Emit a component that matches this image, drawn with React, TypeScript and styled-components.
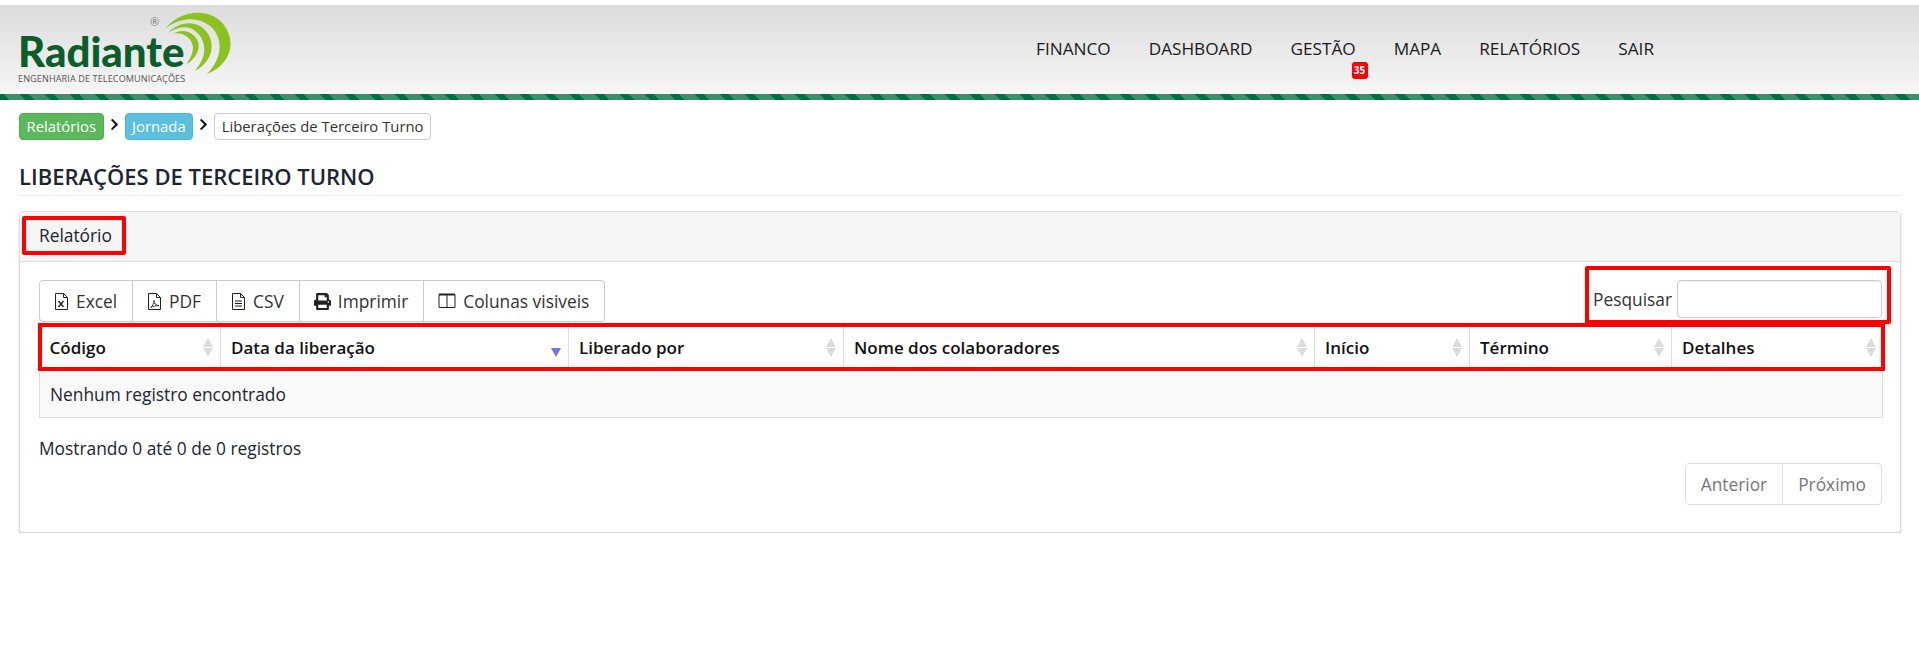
import React from "react";
import styled, { createGlobalStyle } from "styled-components";
import { FaChevronRight, FaPrint } from "react-icons/fa";

const GlobalStyle = createGlobalStyle`
  html, body {
    margin: 0;
    background: #fff;
    color: #1c2530;
    font-family: "Open Sans", "Liberation Sans", sans-serif;
    font-size: 17.33px;
  }
  * { box-sizing: border-box; }
`;

const Header = styled.header`
  margin-top: 5px;
  height: 95px;
  display: flex;
  flex-direction: column;
`;

const HeaderBar = styled.div`
  flex: 1;
  display: flex;
  align-items: flex-start;
  justify-content: space-between;
  padding: 0 265px 0 18px;
  background: linear-gradient(#dcdcdc, #f6f6f6);
`;

const Stripe = styled.div`
  height: 6px;
  background: repeating-linear-gradient(
    45deg,
    #006f43 0,
    #006f43 7px,
    #3a8f6c 7px,
    #3a8f6c 17.68px
  );
`;

const Logo = styled.div`
  position: relative;
  width: 213px;
  height: 89px;
`;

const LogoName = styled.div`
  padding-top: 28px;
  font-family: Lato, "Open Sans", sans-serif;
  font-size: 42px;
  line-height: 36px;
  font-weight: 900;
  color: #0b5d2c;
`;

const LogoTagline = styled.div`
  margin-top: 5px;
  font-size: 9.1px;
  line-height: 10px;
  letter-spacing: 0.1px;
  color: #555;
  white-space: nowrap;
`;

const LogoMark = styled.span`
  position: absolute;
  left: 132px;
  top: 11px;
  font-size: 11px;
  line-height: 12px;
  color: #777;
`;

const LogoWaves = styled.svg`
  position: absolute;
  left: 127px;
  top: 1px;
`;

const Nav = styled.nav`
  display: flex;
  gap: 38px;
  padding-top: 33px;
`;

const NavItem = styled.a`
  position: relative;
  font-size: 17.2px;
  line-height: 22px;
  color: #1a1a1a;
  text-transform: uppercase;
`;

const NavBadge = styled.span`
  position: absolute;
  left: 61px;
  top: 24px;
  width: 16px;
  height: 17px;
  border-radius: 3px;
  background: #f00;
  color: #fff;
  font-size: 10px;
  line-height: 17px;
  font-weight: 700;
  text-align: center;
`;

const Page = styled.main`
  padding: 13px 18px 0 19px;
`;

const Breadcrumb = styled.div`
  display: flex;
  align-items: center;
  height: 27px;
`;

const tagColors = {
  green: "background:#5cb85c;border-color:#4cae4c;color:#fff;",
  blue: "background:#5bc0de;border-color:#46b8da;color:#fff;",
  plain: "background:#fff;border-color:#ccc;color:#333;",
};

const Tag = styled.span<{ $tone: keyof typeof tagColors }>`
  display: block;
  height: 27px;
  padding: 0 6.5px;
  border: 1px solid;
  border-radius: 4px;
  font-size: 14.85px;
  line-height: 25px;
  ${(p) => tagColors[p.$tone]}
`;

const Sep = styled(FaChevronRight)`
  width: 11px;
  height: 13px;
  margin: -4px 5px 0 5px;
  color: #111;
`;

const Title = styled.h1`
  margin: 23px 0 0;
  padding-bottom: 5px;
  border-bottom: 1px solid #eee;
  font-size: 22px;
  line-height: 27px;
  font-weight: 600;
  color: #1c2530;
`;

const Panel = styled.section`
  margin-top: 15px;
  border: 1px solid #ddd;
  border-radius: 4px;
  box-shadow: 0 2px 2px rgba(0, 0, 0, 0.2);
  background: #fff;
`;

const PanelHeading = styled.div`
  height: 50px;
  padding: 4px 2px 0;
  background: #f5f5f5;
  border-bottom: 1px solid #ddd;
`;

const HeadingTitle = styled.span`
  display: inline-block;
  height: 39px;
  padding: 0 10px 0 13px;
  border: 4px solid #f00;
  border-radius: 2px;
  font-size: 17.33px;
  line-height: 31px;
`;

const PanelBody = styled.div`
  padding: 18px 18px 27px 19px;
`;

const ToolRow = styled.div`
  display: flex;
  justify-content: space-between;
  align-items: flex-start;
  height: 45px;
`;

const ButtonGroup = styled.div`
  display: flex;
  height: 42px;
  border: 1px solid #ccc;
  border-radius: 4px;
`;

const ToolButton = styled.div`
  display: flex;
  align-items: center;
  gap: 7px;
  padding: 0 15px 0 14px;
  font-size: 17.33px;
  color: #333;
  & + & {
    border-left: 1px solid #ccc;
  }
`;

const ToolIcon = styled.svg`
  flex: none;
  color: #222;
`;

const PrintIcon = styled(FaPrint)`
  width: 17px;
  height: 17px;
  color: #222;
`;

const SearchBox = styled.label`
  position: relative;
  z-index: 1;
  display: flex;
  align-items: flex-end;
  justify-content: flex-end;
  gap: 5px;
  width: 306px;
  height: 58px;
  margin: -14px -9px 0 0;
  padding: 0 5px 2px 3px;
  border: 4px solid #f00;
  border-radius: 2px;
  font-size: 17.33px;
  color: #333;
  background: #fff;
`;

const SearchLabel = styled.span`
  padding-bottom: 8px;
  line-height: 22px;
`;

const SearchInput = styled.input`
  width: 205px;
  height: 38px;
  border: 1px solid #ccc;
  border-radius: 4px;
  box-shadow: inset 0 1px 1px rgba(0, 0, 0, 0.075);
  outline: none;
`;

const Table = styled.table`
  width: 100%;
  table-layout: fixed;
  border-collapse: collapse;
`;

const TableHead = styled.thead`
  outline: 4px solid #f00;
  outline-offset: -2px;
`;

const Th = styled.th`
  position: relative;
  height: 44px;
  padding: 0 8px 0 10px;
  border-left: 1px solid #ddd;
  font-size: 17px;
  font-weight: 600;
  text-align: left;
  color: #111;
  &:first-child {
    border-left: none;
  }
`;

const SortArrows = styled.span<{ $active?: boolean }>`
  position: absolute;
  right: 7px;
  top: 13px;
  display: flex;
  flex-direction: column;
  gap: 1px;
  &::before,
  &::after {
    content: "";
    width: 0;
    height: 0;
    border-left: 5px solid transparent;
    border-right: 5px solid transparent;
  }
  &::before {
    border-bottom: 9px solid ${(p) => (p.$active ? "transparent" : "#dcdcdc")};
  }
  &::after {
    border-top: 9px solid ${(p) => (p.$active ? "#7478d8" : "#dcdcdc")};
  }
`;

const EmptyCell = styled.td`
  height: 48px;
  padding: 2px 10px 0;
  background: #f9f9f9;
  border: 1px solid #ddd;
  border-top: none;
  font-size: 17.33px;
  color: #1c2530;
`;

const Info = styled.div`
  margin-top: 18px;
  font-size: 17.33px;
  line-height: 24px;
`;

const PagerRow = styled.div`
  display: flex;
  justify-content: flex-end;
  margin-top: 3px;
`;

const Pager = styled.div`
  display: flex;
  height: 42px;
  border: 1px solid #ddd;
  border-radius: 4px;
`;

const PagerItem = styled.span`
  padding: 0 15px;
  font-size: 17.33px;
  line-height: 40px;
  color: #777;
  & + & {
    border-left: 1px solid #ddd;
  }
`;

const FileIcon = ({ children }: { children: React.ReactNode }) => (
  <ToolIcon width="15" height="17" viewBox="0 0 15 17" fill="none" stroke="currentColor">
    <path d="M1.5.5h8l4 4v12h-12z M9.5.5v4h4" />
    {children}
  </ToolIcon>
);

const ColumnsIcon = () => (
  <ToolIcon width="18" height="16" viewBox="0 0 18 16" fill="none" stroke="currentColor">
    <path d="M1 1.500h16v13H1z M9 1.500v13" />
    <path d="M1 1.500h16" strokeWidth="2" />
  </ToolIcon>
);

const columns = [
  { label: "Código", width: 181 },
  { label: "Data da liberação", width: 348, active: true },
  { label: "Liberado por", width: 275 },
  { label: "Nome dos colaboradores", width: 471 },
  { label: "Início", width: 155 },
  { label: "Término", width: 202 },
  { label: "Detalhes", width: 211 },
];

export default function App() {
  return (
    <>
      <GlobalStyle />
      <Header>
        <HeaderBar>
          <Logo>
            <LogoName>Radiante</LogoName>
            <LogoTagline>ENGENHARIA DE TELECOMUNICAÇÕES</LogoTagline>
            <LogoMark>®</LogoMark>
            <LogoWaves width="95" height="78" viewBox="0 0 285 225">
              <path
                fill="#8cc21f"
                d="M60 65C100 10 190-5 235 50c40 50 25 120-50 150 50-50 50-110 10-145C155 25 100 30 60 65Z"
              />
              <path
                fill="#8cc21f"
                d="M70 75c35-35 90-40 120 5 25 45 0 90-40 110 25-30 40-65 15-105C140 50 105 55 70 75Z"
              />
              <path
                fill="#8cc21f"
                d="M85 78c30-18 65-3 75 27 5 25-10 50-35 65 15-25 25-45 15-65-10-20-30-30-55-27Z"
              />
            </LogoWaves>
          </Logo>
          <Nav>
            <NavItem>Financo</NavItem>
            <NavItem>Dashboard</NavItem>
            <NavItem>
              Gestão
              <NavBadge>35</NavBadge>
            </NavItem>
            <NavItem>Mapa</NavItem>
            <NavItem>Relatórios</NavItem>
            <NavItem>Sair</NavItem>
          </Nav>
        </HeaderBar>
        <Stripe />
      </Header>
      <Page>
        <Breadcrumb>
          <Tag $tone="green">Relatórios</Tag>
          <Sep />
          <Tag $tone="blue">Jornada</Tag>
          <Sep />
          <Tag $tone="plain">Liberações de Terceiro Turno</Tag>
        </Breadcrumb>
        <Title>LIBERAÇÕES DE TERCEIRO TURNO</Title>
        <Panel>
          <PanelHeading>
            <HeadingTitle>Relatório</HeadingTitle>
          </PanelHeading>
          <PanelBody>
            <ToolRow>
              <ButtonGroup>
                <ToolButton>
                  <FileIcon>
                    <path d="M4.5 8l5 6M9.5 8l-5 6" strokeWidth="1.4" />
                  </FileIcon>
                  Excel
                </ToolButton>
                <ToolButton>
                  <FileIcon>
                    <path d="M3.5 14.5c2-1 3.5-4 3.5-7 0 3 2 5 5 5.2-3-.2-6 .5-8.500 1.800z" strokeWidth="0.9" />
                  </FileIcon>
                  PDF
                </ToolButton>
                <ToolButton>
                  <FileIcon>
                    <path d="M4 8h7M4 10.500h7M4 13h7" />
                  </FileIcon>
                  CSV
                </ToolButton>
                <ToolButton>
                  <PrintIcon />
                  Imprimir
                </ToolButton>
                <ToolButton>
                  <ColumnsIcon />
                  Colunas visiveis
                </ToolButton>
              </ButtonGroup>
              <SearchBox>
                <SearchLabel>Pesquisar</SearchLabel>
                <SearchInput />
              </SearchBox>
            </ToolRow>
            <Table>
              <colgroup>
                {columns.map((c) => (
                  <col key={c.label} width={c.width} />
                ))}
              </colgroup>
              <TableHead>
                <tr>
                  {columns.map((c) => (
                    <Th key={c.label}>
                      {c.label}
                      <SortArrows $active={c.active} />
                    </Th>
                  ))}
                </tr>
              </TableHead>
              <tbody>
                <tr>
                  <EmptyCell colSpan={7}>Nenhum registro encontrado</EmptyCell>
                </tr>
              </tbody>
            </Table>
            <Info>Mostrando 0 até 0 de 0 registros</Info>
            <PagerRow>
              <Pager>
                <PagerItem>Anterior</PagerItem>
                <PagerItem>Próximo</PagerItem>
              </Pager>
            </PagerRow>
          </PanelBody>
        </Panel>
      </Page>
    </>
  );
}
